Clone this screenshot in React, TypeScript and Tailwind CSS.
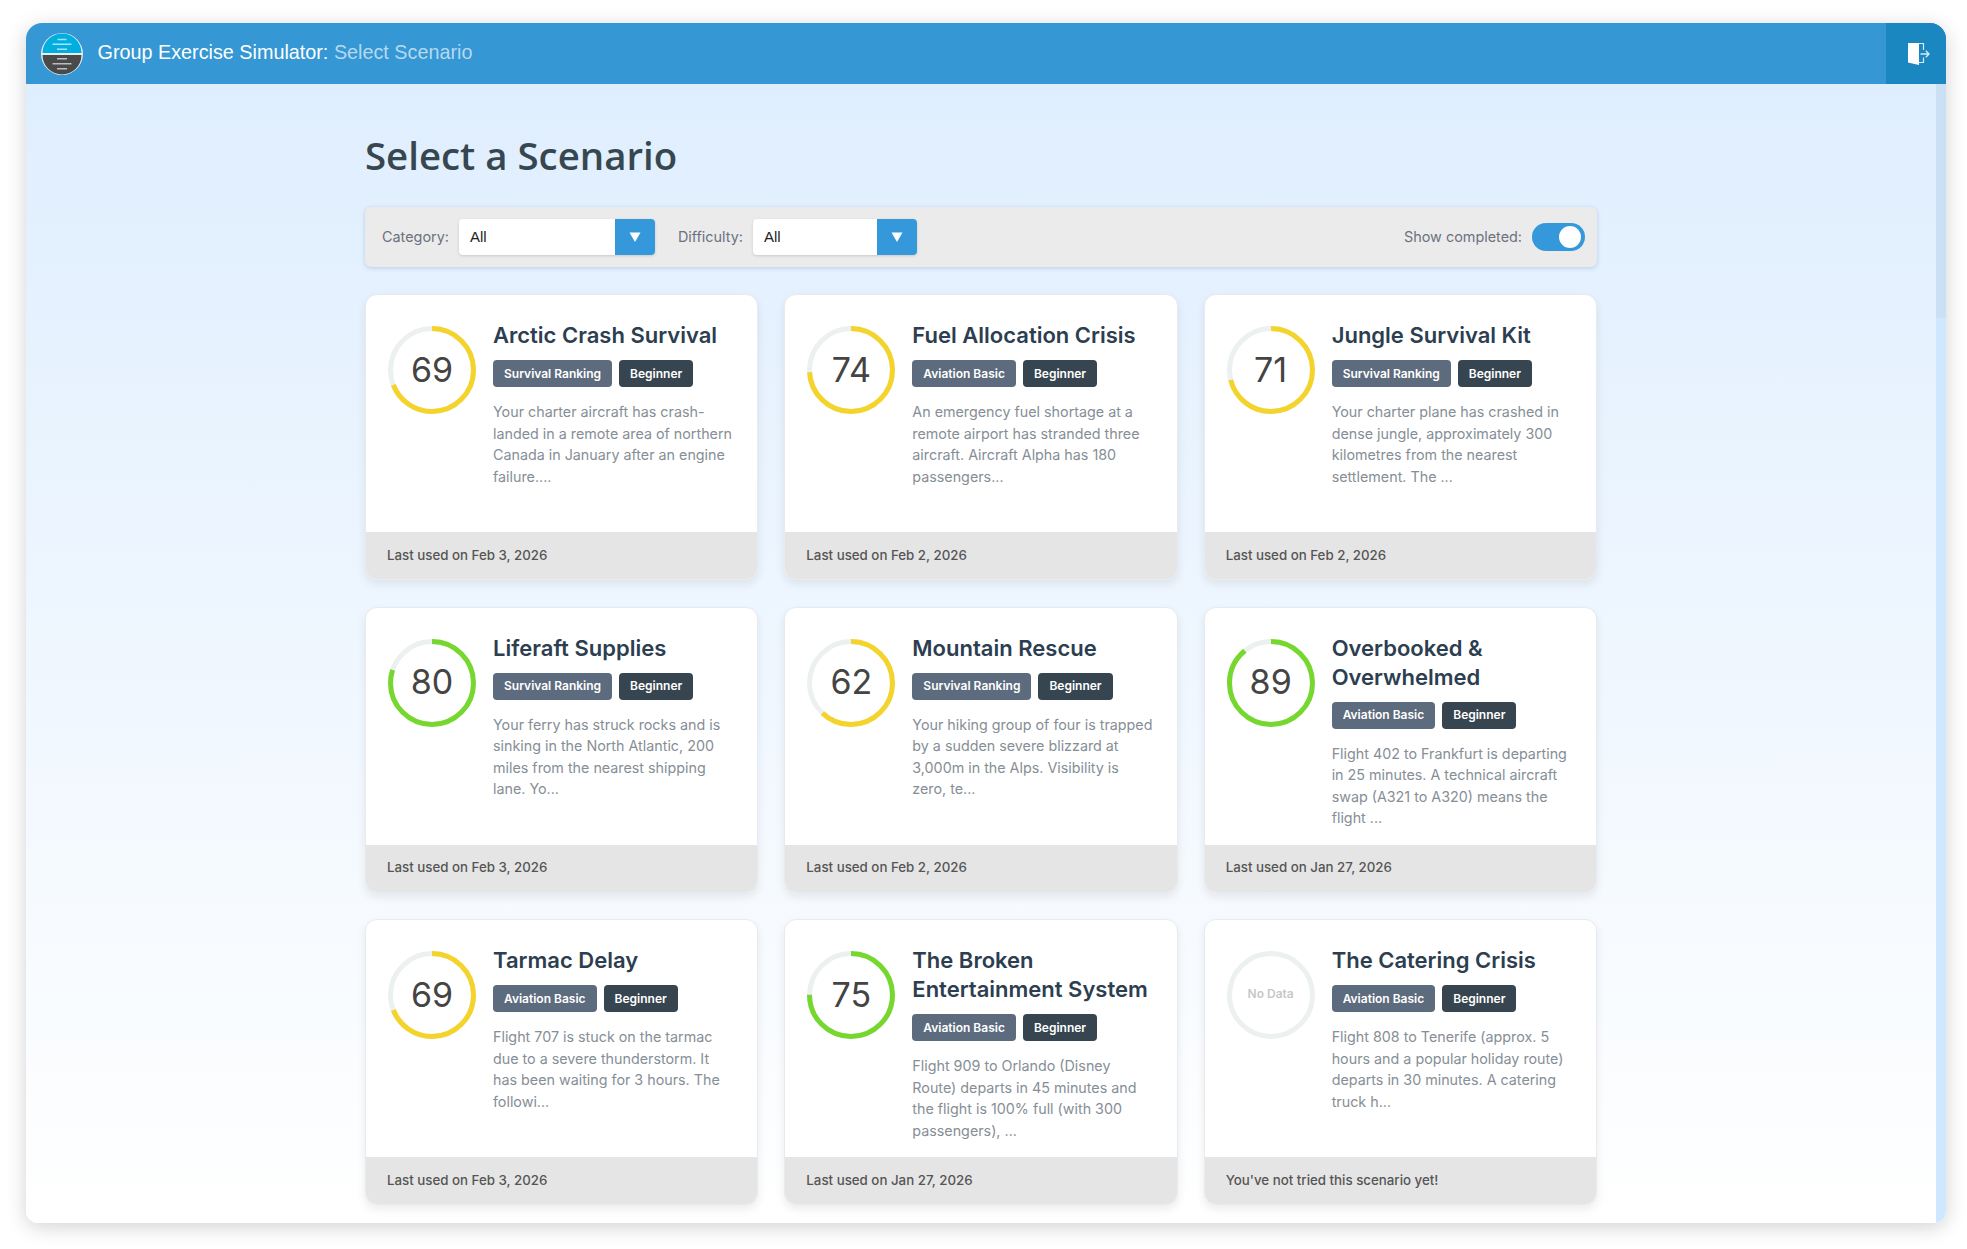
type Scenario = {
  title: string;
  tag: string;
  description: string;
  footer: string;
  score?: number;
};

const scenarios: Scenario[] = [
  { title: 'Arctic Crash Survival', tag: 'Survival Ranking', score: 69, footer: 'Last used on Feb 3, 2026', description: 'Your charter aircraft has crash-landed in a remote area of northern Canada in January after an engine failure....' },
  { title: 'Fuel Allocation Crisis', tag: 'Aviation Basic', score: 74, footer: 'Last used on Feb 2, 2026', description: 'An emergency fuel shortage at a remote airport has stranded three aircraft. Aircraft Alpha has 180 passengers...' },
  { title: 'Jungle Survival Kit', tag: 'Survival Ranking', score: 71, footer: 'Last used on Feb 2, 2026', description: 'Your charter plane has crashed in dense jungle, approximately 300 kilometres from the nearest settlement. The ...' },
  { title: 'Liferaft Supplies', tag: 'Survival Ranking', score: 80, footer: 'Last used on Feb 3, 2026', description: 'Your ferry has struck rocks and is sinking in the North Atlantic, 200 miles from the nearest shipping lane. Yo...' },
  { title: 'Mountain Rescue', tag: 'Survival Ranking', score: 62, footer: 'Last used on Feb 2, 2026', description: 'Your hiking group of four is trapped by a sudden severe blizzard at 3,000m in the Alps. Visibility is zero, te...' },
  { title: 'Overbooked & Overwhelmed', tag: 'Aviation Basic', score: 89, footer: 'Last used on Jan 27, 2026', description: 'Flight 402 to Frankfurt is departing in 25 minutes. A technical aircraft swap (A321 to A320) means the flight ...' },
  { title: 'Tarmac Delay', tag: 'Aviation Basic', score: 69, footer: 'Last used on Feb 3, 2026', description: 'Flight 707 is stuck on the tarmac due to a severe thunderstorm. It has been waiting for 3 hours. The followi...' },
  { title: 'The Broken Entertainment System', tag: 'Aviation Basic', score: 75, footer: 'Last used on Jan 27, 2026', description: 'Flight 909 to Orlando (Disney Route) departs in 45 minutes and the flight is 100% full (with 300 passengers), ...' },
  { title: 'The Catering Crisis', tag: 'Aviation Basic', footer: "You've not tried this scenario yet!", description: 'Flight 808 to Tenerife (approx. 5 hours and a popular holiday route) departs in 30 minutes. A catering truck h...' },
];

const ScoreRing = ({ score }: { score?: number }) => {
  const radius = 41.5;
  const circumference = 2 * Math.PI * radius;
  const color = score !== undefined && score >= 75 ? '#76d72f' : '#f4d32a';

  return (
    <div className="relative w-[88px] h-[88px] shrink-0">
      <svg viewBox="0 0 88 88" className="w-full h-full -rotate-90">
        <circle cx="44" cy="44" r={radius} fill="none" stroke="#ecf0f1" strokeWidth="5" />
        {score !== undefined && (
          <circle
            cx="44"
            cy="44"
            r={radius}
            fill="none"
            stroke={color}
            strokeWidth="5"
            strokeDasharray={`${(score / 100) * circumference} ${circumference}`}
          />
        )}
      </svg>
      <div className="absolute inset-0 flex items-center justify-center pb-[2px]">
        {score !== undefined ? (
          <span className="text-[34px] font-normal text-[#444]">{score}</span>
        ) : (
          <span className="text-xs font-semibold text-[#c8c8c8]">No Data</span>
        )}
      </div>
    </div>
  );
};

const ScenarioCard = ({ title, tag, description, footer, score }: Scenario) => (
  <div className="h-[286px] flex flex-col rounded-xl bg-white border border-[#e8ebee] shadow-[0_4px_10px_rgba(0,0,0,0.08)] overflow-hidden">
    <div className="flex-1 flex gap-[17px] pl-[22px] pr-6 pt-[31px]">
      <ScoreRing score={score} />
      <div className="min-w-0 flex-1 -mt-[5px]">
        <h3 className="text-[22px] leading-[29px] font-semibold text-[#2c3e50]">{title}</h3>
        <div className="flex gap-[7px] mt-[10px] mb-[14px]">
          <span className="h-[27px] flex items-center px-[11px] rounded bg-[#5d6b7e] text-[12px] font-semibold text-white">{tag}</span>
          <span className="h-[27px] flex items-center px-[11px] rounded bg-[#36454f] text-[12px] font-semibold text-white">Beginner</span>
        </div>
        <p className="text-[14.3px] leading-[21.6px] text-[#868e96]">{description}</p>
      </div>
    </div>
    <div className="h-[47px] shrink-0 flex items-center pl-[21px] bg-[#e5e5e5] text-[13.3px] font-medium text-[#555]">{footer}</div>
  </div>
);

const Select = ({ width }: { width: string }) => (
  <div className={`h-9 flex rounded bg-white shadow-[0_1px_3px_rgba(0,0,0,0.15)] overflow-hidden ${width}`}>
    <div className="flex-1 flex items-center pl-[11px] font-['Liberation_Sans',sans-serif] text-[15px] text-[#222]">All</div>
    <div className="w-10 flex items-center justify-center bg-[#3498db]">
      <svg width="12" height="10" viewBox="0 0 12 10">
        <path d="M0.5 0.5h11L6 10z" fill="#fff" />
      </svg>
    </div>
  </div>
);

const Logo = () => (
  <svg width="44" height="44" viewBox="0 0 44 44">
    <circle cx="22" cy="22" r="21" fill="#e8eef2" />
    <path d="M2.5 21a19.5 19.5 0 0 1 39 0z" fill="#00aee0" />
    <path d="M2.5 23a19.5 19.5 0 0 0 39 0z" fill="#4a4a4a" />
    <g stroke="#a9e2f5" strokeWidth="1.6">
      <path d="M17.5 7.5h9M12.5 12.3h19M17 17.3h10" />
    </g>
    <g stroke="#bdbdbd" strokeWidth="1.6">
      <path d="M17 26.7h10M12.5 31.7h19M17 36.7h10" />
    </g>
  </svg>
);

const ExitIcon = () => (
  <svg width="22" height="24" viewBox="0 0 22 24">
    <path d="M0 1H11V23L0 20.5z" fill="#fff" />
    <path d="M11 1.5h4.5V8M15.5 15.5v5H11" fill="none" stroke="#d4ecf7" strokeWidth="1.2" />
    <path d="M12.5 12H21M17.8 8.8l3.2 3.2-3.2 3.2" fill="none" stroke="#d4ecf7" strokeWidth="1.4" />
  </svg>
);

export default function App() {
  return (
    <div className="min-h-screen bg-white pt-[23px] pl-[26px] font-['Inter',sans-serif]">
      <div className="relative w-[1920px] h-[1200px] flex flex-col rounded-t-2xl rounded-b-xl overflow-hidden bg-white shadow-[0_4px_20px_rgba(0,0,0,0.18)]">
        <header className="h-[61px] shrink-0 flex items-center justify-between bg-[#3597d3]">
          <div className="flex items-center pl-[14px] gap-[13.5px]">
            <Logo />
            <div className="pb-[2px] font-['Liberation_Sans',sans-serif] text-[19.8px] text-white">
              Group Exercise Simulator: <span className="text-[#b4d9f1]">Select Scenario</span>
            </div>
          </div>
          <div className="w-[60px] h-full flex items-center justify-center pl-[6px] bg-[#1b87c0]">
            <ExitIcon />
          </div>
        </header>

        <main className="relative flex-1 overflow-hidden bg-gradient-to-b from-[#dfeefe] to-white">
          <div className="w-[1232px] ml-[339px]">
            <h1 className="pt-[44px] h-[123px] font-['Open_Sans',sans-serif] text-[38.4px] leading-[54px] font-semibold text-[#37474f]">Select a Scenario</h1>
            <div className="h-[60px] flex items-center justify-between pl-[17px] pr-3 rounded-md bg-[#ebebeb] shadow-[0_1px_4px_rgba(50,100,160,0.25)]">
              <div className="flex items-center">
                <span className="mr-[10px] text-[14.4px] text-[#6b7280]">Category:</span>
                <Select width="w-[196px]" />
                <span className="ml-[23px] mr-[10px] text-[14.4px] text-[#6b7280]">Difficulty:</span>
                <Select width="w-[164px]" />
              </div>
              <div className="flex items-center gap-2.5">
                <span className="text-[14.4px] text-[#6b7280]">Show completed:</span>
                <div className="w-[53px] h-7 flex items-center justify-end pr-1 rounded-full bg-[#3498db]">
                  <div className="w-[22px] h-[22px] rounded-full bg-white" />
                </div>
              </div>
            </div>
            <div className="grid grid-cols-3 gap-x-[26px] gap-y-[26.5px] mt-[27px]">
              {scenarios.map((s) => (
                <ScenarioCard key={s.title} {...s} />
              ))}
            </div>
          </div>
          <div className="absolute top-0 right-0 bottom-0 w-2.5 bg-[#d0e8ff]">
            <div className="h-[234px] bg-[#cbdff5]" />
          </div>
        </main>
      </div>
    </div>
  );
}
